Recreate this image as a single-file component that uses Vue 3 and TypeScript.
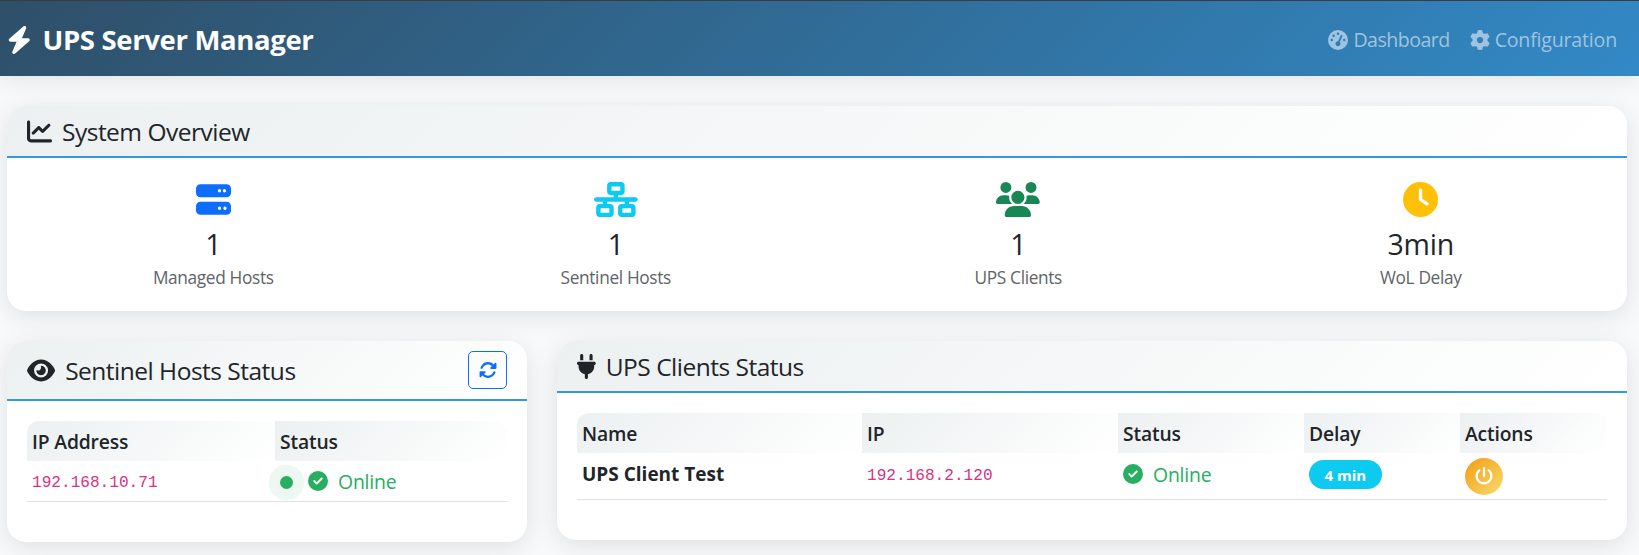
<script setup lang="ts">
interface Glyph { w: number; d: string }

const icons: Record<string, Glyph> = {
  bolt: { w: 448, d: 'M349.4 44.6c5.9-13.7 1.5-29.7-10.6-38.5s-28.6-8-39.9 1.8l-256 224c-10 8.8-13.6 22.9-8.9 35.3S50.7 288 64 288H175.5L98.6 467.4c-5.9 13.7-1.5 29.7 10.6 38.5s28.6 8 39.9-1.8l256-224c10-8.8 13.6-22.9 8.9-35.3s-16.6-20.7-30-20.7H272.5L349.4 44.6z' },
  gauge: { w: 512, d: 'M0 256a256 256 0 1 1 512 0A256 256 0 1 1 0 256zM288 96a32 32 0 1 0 -64 0 32 32 0 1 0 64 0zM256 416c35.3 0 64-28.7 64-64c0-17.4-6.9-33.1-18.1-44.6L366 161.7c5.3-12.1-.2-26.3-12.3-31.6s-26.3 .2-31.6 12.3L257.9 288c-.6 0-1.3 0-1.9 0c-35.3 0-64 28.7-64 64s28.7 64 64 64zM176 144a32 32 0 1 0 -64 0 32 32 0 1 0 64 0zM96 288a32 32 0 1 0 0-64 32 32 0 1 0 0 64zm352-32a32 32 0 1 0 -64 0 32 32 0 1 0 64 0z' },
  gear: { w: 512, d: 'M495.9 166.6c3.2 8.7 .5 18.4-6.4 24.6l-43.3 39.4c1.1 8.3 1.7 16.8 1.7 25.4s-.6 17.1-1.7 25.4l43.3 39.4c6.9 6.2 9.6 15.9 6.4 24.6c-4.4 11.9-9.7 23.3-15.8 34.3l-4.7 8.1c-6.6 11-14 21.4-22.1 31.2c-5.9 7.2-15.7 9.6-24.5 6.8l-55.7-17.7c-13.4 10.3-28.2 18.9-44 25.4l-12.5 57.1c-2 9.1-9 16.3-18.2 17.8c-13.8 2.3-28 3.5-42.5 3.5s-28.7-1.2-42.5-3.5c-9.2-1.5-16.2-8.7-18.2-17.8l-12.5-57.1c-15.8-6.5-30.6-15.1-44-25.4L83.1 425.9c-8.8 2.8-18.6 .3-24.5-6.8c-8.1-9.8-15.5-20.2-22.1-31.2l-4.7-8.1c-6.1-11-11.4-22.4-15.8-34.3c-3.2-8.7-.5-18.4 6.4-24.6l43.3-39.4C64.6 273.1 64 264.6 64 256s.6-17.1 1.7-25.4L22.4 191.2c-6.9-6.2-9.6-15.9-6.4-24.6c4.4-11.9 9.7-23.3 15.8-34.3l4.7-8.1c6.6-11 14-21.4 22.1-31.2c5.9-7.2 15.7-9.6 24.5-6.8l55.7 17.7c13.4-10.3 28.2-18.9 44-25.4l12.5-57.1c2-9.1 9-16.3 18.2-17.8C227.3 1.2 241.5 0 256 0s28.7 1.2 42.5 3.5c9.2 1.5 16.2 8.7 18.2 17.8l12.5 57.1c15.8 6.5 30.6 15.1 44 25.4l55.7-17.7c8.8-2.8 18.6-.3 24.5 6.8c8.1 9.8 15.5 20.2 22.1 31.2l4.7 8.1c6.1 11 11.4 22.4 15.8 34.3zM256 336a80 80 0 1 0 0-160 80 80 0 1 0 0 160z' },
  chart: { w: 512, d: 'M64 64c0-17.7-14.3-32-32-32S0 46.3 0 64V400c0 44.2 35.8 80 80 80H480c17.7 0 32-14.3 32-32s-14.3-32-32-32H80c-8.8 0-16-7.2-16-16V64zm406.6 86.6c12.5-12.5 12.5-32.8 0-45.3s-32.8-12.5-45.3 0L320 210.7l-57.4-57.4c-12.5-12.5-32.8-12.5-45.3 0l-112 112c-12.5 12.5-12.5 32.8 0 45.3s32.8 12.5 45.3 0L240 221.3l57.4 57.4c12.5 12.5 32.8 12.5 45.3 0l128-128z' },
  server: { w: 512, d: 'M64 32C28.7 32 0 60.7 0 96v64c0 35.3 28.7 64 64 64H448c35.3 0 64-28.7 64-64V96c0-35.3-28.7-64-64-64H64zm280 72a24 24 0 1 1 0 48 24 24 0 1 1 0-48zm48 24a24 24 0 1 1 48 0 24 24 0 1 1 -48 0zM64 288c-35.3 0-64 28.7-64 64v64c0 35.3 28.7 64 64 64H448c35.3 0 64-28.7 64-64V352c0-35.3-28.7-64-64-64H64zm280 72a24 24 0 1 1 0 48 24 24 0 1 1 0-48zm56 24a24 24 0 1 1 48 0 24 24 0 1 1 -48 0z' },
  network: { w: 640, d: 'M256 64H384v64H256V64zM240 0c-26.5 0-48 21.5-48 48v96c0 26.5 21.5 48 48 48h48v32H32c-17.7 0-32 14.3-32 32s14.3 32 32 32h96v32H80c-26.5 0-48 21.5-48 48v96c0 26.5 21.5 48 48 48H240c26.5 0 48-21.5 48-48V368c0-26.5-21.5-48-48-48H192V288H448v32H400c-26.5 0-48 21.5-48 48v96c0 26.5 21.5 48 48 48H560c26.5 0 48-21.5 48-48V368c0-26.5-21.5-48-48-48H512V288h96c17.7 0 32-14.3 32-32s-14.3-32-32-32H352V192h48c26.5 0 48-21.5 48-48V48c0-26.5-21.5-48-48-48H240zM96 448V384H224v64H96zm320-64H544v64H416V384z' },
  users: { w: 640, d: 'M144 0a80 80 0 1 1 0 160A80 80 0 1 1 144 0zM512 0a80 80 0 1 1 0 160A80 80 0 1 1 512 0zM0 298.7C0 239.8 47.8 192 106.7 192h42.7c15.9 0 31 3.5 44.6 9.7c-1.3 7.2-1.9 14.7-1.9 22.3c0 38.2 16.8 72.5 43.3 96c-.2 0-.4 0-.7 0H21.3C9.6 320 0 310.4 0 298.7zM405.3 320c-.2 0-.4 0-.7 0c26.6-23.5 43.3-57.8 43.3-96c0-7.6-.7-15-1.9-22.3c13.6-6.3 28.7-9.7 44.6-9.7h42.7C592.2 192 640 239.8 640 298.7c0 11.8-9.6 21.3-21.3 21.3H405.3zM224 224a96 96 0 1 1 192 0 96 96 0 1 1 -192 0zM128 485.3C128 411.7 187.7 352 261.3 352H378.7C452.3 352 512 411.7 512 485.3c0 14.7-11.9 26.7-26.7 26.7H154.7c-14.7 0-26.7-11.9-26.7-26.7z' },
  clock: { w: 512, d: 'M256 0a256 256 0 1 1 0 512A256 256 0 1 1 256 0zM232 120V256c0 8 4 15.5 10.7 20l96 64c11 7.4 25.9 4.4 33.3-6.7s4.4-25.9-6.7-33.3L280 243.2V120c0-13.3-10.7-24-24-24s-24 10.7-24 24z' },
  eye: { w: 576, d: 'M288 32c-80.8 0-145.5 36.8-192.6 80.6C48.6 156 17.3 208 2.5 243.7c-3.3 7.9-3.3 16.7 0 24.6C17.3 304 48.6 356 95.4 399.4C142.5 443.2 207.2 480 288 480s145.5-36.8 192.6-80.6c46.8-43.5 78.1-95.4 93-131.1c3.3-7.9 3.3-16.7 0-24.6c-14.9-35.7-46.2-87.7-93-131.1C433.5 68.8 368.8 32 288 32zM144 256a144 144 0 1 1 288 0 144 144 0 1 1 -288 0zm144-64c0 35.3-28.7 64-64 64c-7.1 0-13.9-1.2-20.3-3.3c-5.5-1.8-11.9 1.6-11.7 7.4c.3 6.9 1.3 13.8 3.2 20.7c13.7 51.2 66.4 81.6 117.6 67.9s81.6-66.4 67.9-117.6c-11.1-41.5-47.8-69.4-88.6-71.1c-5.8-.2-9.2 6.1-7.4 11.7c2.1 6.4 3.3 13.2 3.3 20.3z' },
  plug: { w: 384, d: 'M96 0C78.3 0 64 14.3 64 32v96h64V32c0-17.7-14.3-32-32-32zM288 0c-17.7 0-32 14.3-32 32v96h64V32c0-17.7-14.3-32-32-32zM32 160c-17.7 0-32 14.3-32 32s14.3 32 32 32v32c0 77.4 55 142 128 156.8V480c0 17.7 14.3 32 32 32s32-14.3 32-32V412.8C297 398 352 333.4 352 256V224c17.7 0 32-14.3 32-32s-14.3-32-32-32H32z' },
  rotate: { w: 512, d: 'M142.9 142.9c62.2-62.2 162.7-62.5 225.3-1L327 183c-6.9 6.9-8.9 17.2-5.2 26.2s12.5 14.8 22.2 14.8H463.5c0 0 0 0 0 0H472c13.3 0 24-10.7 24-24V72c0-9.7-5.8-18.5-14.8-22.2s-19.3-1.7-26.2 5.2L413.4 96.6c-87.6-86.5-228.7-86.2-315.8 1C73.2 122 55.6 150.7 44.8 181.4c-5.9 16.7 2.9 34.9 19.5 40.8s34.9-2.9 40.8-19.5c7.7-21.8 20.2-42.3 37.8-59.8zM16 312v7.6 .7V440c0 9.7 5.8 18.5 14.8 22.2s19.3 1.7 26.2-5.2l41.6-41.6c87.6 86.5 228.7 86.2 315.8-1c24.4-24.4 42.1-53.1 52.9-83.7c5.9-16.7-2.9-34.9-19.5-40.8s-34.9 2.9-40.8 19.5c-7.7 21.8-20.2 42.3-37.8 59.8c-62.2 62.2-162.7 62.5-225.3 1L185 329c6.9-6.9 8.9-17.2 5.2-26.2s-12.5-14.8-22.2-14.8H48.4h-.7H40c-13.3 0-24 10.7-24 24z' },
  check: { w: 512, d: 'M256 512A256 256 0 1 0 256 0a256 256 0 1 0 0 512zM369 209L241 337c-9.4 9.4-24.6 9.4-33.9 0l-64-64c-9.4-9.4-9.4-24.6 0-33.9s24.6-9.4 33.9 0l47 47L335 175c9.4-9.4 24.6-9.4 33.9 0s9.4 24.6 0 33.9z' },
  power: { w: 512, d: 'M288 32c0-17.7-14.3-32-32-32s-32 14.3-32 32V256c0 17.7 14.3 32 32 32s32-14.3 32-32V32zM143.5 120.6c13.6-11.3 15.4-31.5 4.1-45.1s-31.5-15.4-45.1-4.1C49.7 115.4 16 181.8 16 256c0 132.5 107.5 240 240 240s240-107.5 240-240c0-74.2-33.8-140.6-86.6-184.6c-13.6-11.3-33.8-9.4-45.1 4.1s-9.4 33.8 4.1 45.1c38.9 32.3 63.5 81 63.5 135.4c0 97.2-78.8 176-176 176s-176-78.8-176-176c0-54.4 24.7-103.1 63.5-135.4z' },
}

const box = (name: string): string => `0 0 ${icons[name].w} 512`

const navLinks = [
  { icon: 'gauge', label: 'Dashboard', tone: 'nav-dashboard' },
  { icon: 'gear', label: 'Configuration', tone: 'nav-config' },
]

const stats = [
  { icon: 'server', tone: 'primary', value: '1', label: 'Managed Hosts' },
  { icon: 'network', tone: 'info', value: '1', label: 'Sentinel Hosts' },
  { icon: 'users', tone: 'success', value: '1', label: 'UPS Clients' },
  { icon: 'clock', tone: 'warning', value: '3min', label: 'WoL Delay' },
]

const sentinels = [{ ip: '192.168.10.71', status: 'Online' }]
const clients = [{ name: 'UPS Client Test', ip: '192.168.2.120', status: 'Online', delay: '4 min' }]
</script>

<template>
  <div class="page">
    <header class="navbar">
      <div class="brand">
        <svg class="icon brand-icon" :viewBox="box('bolt')"><path :d="icons.bolt.d" /></svg>
        <span class="brand-name">UPS Server Manager</span>
      </div>
      <nav class="nav">
        <a v-for="link in navLinks" :key="link.label" class="nav-link" :class="link.tone">
          <svg class="icon nav-icon" :viewBox="box(link.icon)"><path :d="icons[link.icon].d" /></svg>
          <span>{{ link.label }}</span>
        </a>
      </nav>
    </header>

    <main class="content">
      <section class="card overview">
        <div class="card-header">
          <svg class="icon head-icon" :viewBox="box('chart')"><path :d="icons.chart.d" /></svg>
          <h5 class="title">System Overview</h5>
        </div>
        <div class="stats">
          <div v-for="stat in stats" :key="stat.label" class="stat">
            <svg class="icon stat-icon" :class="stat.tone" :viewBox="box(stat.icon)"><path :d="icons[stat.icon].d" /></svg>
            <div class="stat-value">{{ stat.value }}</div>
            <div class="stat-label">{{ stat.label }}</div>
          </div>
        </div>
      </section>

      <div class="columns">
        <section class="card sentinel">
          <div class="card-header tall">
            <svg class="icon head-icon" :viewBox="box('eye')"><path :d="icons.eye.d" /></svg>
            <h5 class="title">Sentinel Hosts Status</h5>
            <button class="refresh" type="button" aria-label="Refresh">
              <svg class="icon refresh-icon" :viewBox="box('rotate')"><path :d="icons.rotate.d" /></svg>
            </button>
          </div>
          <div class="table sentinel-table">
            <div class="row head">
              <div class="cell">IP Address</div>
              <div class="cell">Status</div>
            </div>
            <div v-for="host in sentinels" :key="host.ip" class="row data">
              <div class="cell"><code>{{ host.ip }}</code></div>
              <div class="cell">
                <span class="pulse"></span>
                <svg class="icon check-icon" :viewBox="box('check')"><path :d="icons.check.d" /></svg>
                <span class="online">{{ host.status }}</span>
              </div>
            </div>
          </div>
        </section>

        <section class="card clients">
          <div class="card-header">
            <svg class="icon head-icon" :viewBox="box('plug')"><path :d="icons.plug.d" /></svg>
            <h5 class="title">UPS Clients Status</h5>
          </div>
          <div class="table clients-table">
            <div class="row head">
              <div class="cell">Name</div>
              <div class="cell">IP</div>
              <div class="cell">Status</div>
              <div class="cell">Delay</div>
              <div class="cell">Actions</div>
            </div>
            <div v-for="client in clients" :key="client.ip" class="row data">
              <div class="cell"><strong>{{ client.name }}</strong></div>
              <div class="cell"><code>{{ client.ip }}</code></div>
              <div class="cell">
                <svg class="icon check-icon" :viewBox="box('check')"><path :d="icons.check.d" /></svg>
                <span class="online">{{ client.status }}</span>
              </div>
              <div class="cell"><span class="badge">{{ client.delay }}</span></div>
              <div class="cell action">
                <button class="power" type="button" aria-label="Power">
                  <svg class="icon power-icon" :viewBox="box('power')"><path :d="icons.power.d" /></svg>
                </button>
              </div>
            </div>
          </div>
        </section>
      </div>
    </main>
  </div>
</template>

<style>
body {
  margin: 0;
  background: #f8f9fa;
  overflow: hidden;
}
</style>

<style scoped>
.page {
  box-sizing: border-box;
  height: 555px;
  overflow: hidden;
  border-top: 1px solid #3b3b42;
  background: #f8f9fa;
  color: #212529;
  font-family: "Open Sans", "Noto Sans", sans-serif;
  font-size: 19px;
  line-height: 30px;
  white-space: nowrap;
}
.icon {
  display: block;
  flex: none;
  fill: currentColor;
}
.navbar {
  display: flex;
  align-items: center;
  justify-content: space-between;
  box-sizing: border-box;
  height: 75px;
  padding: 2px 22px 0 7px;
  background: linear-gradient(135deg, #2f4f68 0%, #3289c6 100%);
  box-shadow: 0 2px 25px rgba(0, 0, 0, 0.1);
  color: #fff;
}
.brand {
  display: flex;
  align-items: center;
  gap: 11px;
}
.brand-icon {
  height: 28px;
}
.brand-name {
  font-size: 27.5px;
  font-weight: 700;
  letter-spacing: -0.35px;
}
.nav {
  display: flex;
  gap: 20px;
  color: #9fc4df;
  font-size: 19.6px;
}
.nav-link {
  display: flex;
  align-items: center;
  gap: 5px;
}
.nav-dashboard {
  letter-spacing: -0.55px;
}
.nav-config {
  letter-spacing: -0.2px;
}
.nav-icon {
  height: 20px;
}
.content {
  padding: 30px 12px 0 7px;
}
.card {
  border-radius: 19px;
  background: #fff;
  box-shadow: 0 5px 25px rgba(0, 0, 0, 0.1);
}
.card-header {
  display: flex;
  align-items: center;
  gap: 10px;
  box-sizing: border-box;
  height: 52px;
  padding: 0 20px;
  border-bottom: 2px solid #3498db;
  border-radius: 19px 19px 0 0;
  background: linear-gradient(135deg, #ecf0f1 0%, #fff 100%);
}
.card-header.tall {
  height: 60px;
}
.head-icon {
  height: 25px;
}
.title {
  margin: 0;
  padding-top: 2px;
  font-size: 24.5px;
  font-weight: 400;
  letter-spacing: -0.5px;
}
.overview {
  height: 205px;
}
.stats {
  display: grid;
  grid-template-columns: repeat(4, 1fr);
  padding: 24px 5px 0;
}
.stat {
  display: flex;
  flex-direction: column;
  align-items: center;
}
.stat-icon {
  height: 35px;
}
.primary { color: #0d6efd; }
.info { color: #0dcaf0; }
.success { color: #198754; }
.warning { color: #ffc107; }
.stat-value {
  margin-top: 9px;
  font-size: 28.5px;
  line-height: 36px;
  letter-spacing: -0.2px;
}
.stat-label {
  margin-top: 2px;
  font-size: 17.3px;
  line-height: 27px;
  letter-spacing: -0.35px;
  color: #606468;
}
.columns {
  display: grid;
  grid-template-columns: 520px 1fr;
  gap: 30px;
  align-items: start;
  margin-top: 30px;
}
.sentinel {
  height: 201px;
}
.clients {
  height: 199px;
}
.refresh {
  display: flex;
  align-items: center;
  justify-content: center;
  box-sizing: border-box;
  width: 39px;
  height: 38px;
  margin-left: auto;
  padding: 0;
  border: 1px solid #0d6efd;
  border-radius: 5px;
  background: transparent;
  color: #0d6efd;
}
.refresh-icon {
  height: 18px;
}
.table {
  margin: 20px 20px 0;
}
.row {
  display: grid;
}
.sentinel-table .row {
  grid-template-columns: 248px 1fr;
}
.clients-table .row {
  grid-template-columns: 285px 256px 186px 156px 1fr;
}
.cell {
  display: flex;
  align-items: center;
  padding: 0 5px;
}
.head .cell {
  box-sizing: border-box;
  height: 40px;
  padding-top: 2px;
  background: linear-gradient(135deg, #ecf0f1 0%, #fff 100%);
  font-weight: 600;
  font-size: 19.3px;
  letter-spacing: -0.15px;
}
.head .cell:first-child {
  border-top-left-radius: 12px;
}
.head .cell:last-child {
  border-top-right-radius: 12px;
}
.data {
  height: 40px;
  border-bottom: 1px solid #dee2e6;
}
.clients .data {
  height: 46px;
}
.clients .data .cell {
  padding-bottom: 4px;
}
.clients .data .action {
  padding-bottom: 0;
}
code {
  padding-top: 4px;
  font-family: "Liberation Mono", monospace;
  font-size: 16.1px;
  color: #d63384;
}
.pulse {
  width: 13px;
  height: 13px;
  margin: 3px 15px 0 0;
  border-radius: 50%;
  background: #27ae60;
  box-shadow: 0 0 0 11px #eef8f2;
}
.check-icon {
  height: 20px;
  color: #27ae60;
}
.online {
  margin-left: 10px;
  padding-top: 2px;
  font-size: 19.4px;
  letter-spacing: -0.2px;
  color: #27ae60;
}
strong {
  font-weight: 700;
}
.badge {
  height: 29px;
  padding: 0 15.5px;
  border-radius: 15px;
  background: #0dcaf0;
  color: #fff;
  font-size: 15px;
  font-weight: 700;
}
.power {
  display: flex;
  align-items: center;
  justify-content: center;
  width: 38px;
  height: 37px;
  padding: 0;
  border: 0;
  border-radius: 50%;
  background: linear-gradient(135deg, #f39c12 0%, #f7dc6f 100%);
  color: #fff;
}
.power-icon {
  height: 18px;
}
</style>
